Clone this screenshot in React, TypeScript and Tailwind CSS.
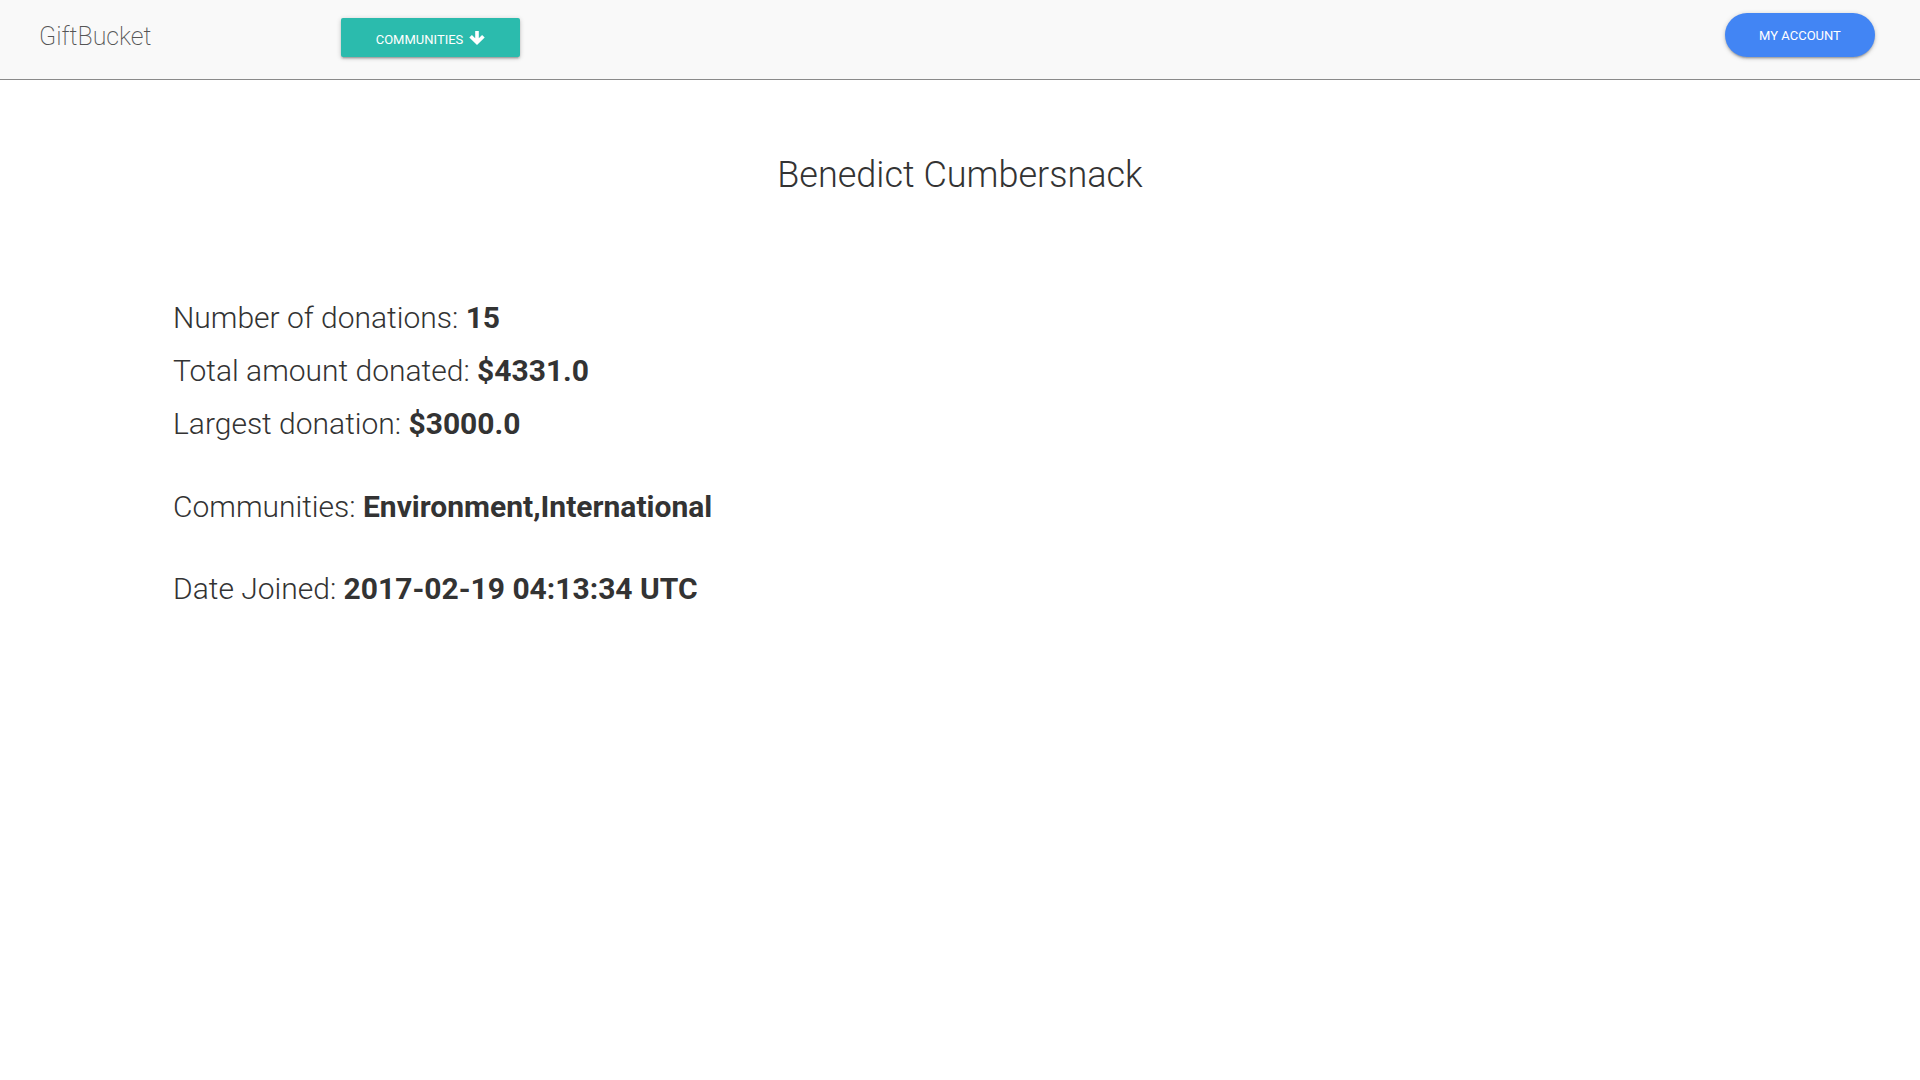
import React from "react";

const stats = [
  { label: "Number of donations:", value: "15" },
  { label: "Total amount donated:", value: "$4331.0" },
  { label: "Largest donation:", value: "$3000.0" },
];

// chunky down arrow, like the old font-awesome glyph
const ArrowDown = () => (
  <svg width="16" height="14" viewBox="0 0 16 14" fill="currentColor" className="-mt-[4px]">
    <path d="M6.2 0h3.6v7.2l3.3-3.3 2.6 2.6L8 14 0.3 6.5l2.6-2.6 3.3 3.3Z" />
  </svg>
);

const Navbar = () => {
  return (
    <nav className="h-[80px] bg-[#f9f9f9] border-b border-[#8a8a8a] flex items-start">
      <div className="w-[341px] pl-[39px] pt-[19px]">
        <a className="text-[25px] font-extralight text-[#555] leading-[36px]">GiftBucket</a>
      </div>
      <button className="mt-[18px] h-[39px] w-[179px] pt-[5px] bg-[#2bbbad] rounded-[2px] text-white text-[13px] uppercase flex items-center justify-center gap-[6px] shadow-[0_2px_2px_0_rgba(0,0,0,0.14),0_3px_1px_-2px_rgba(0,0,0,0.12),0_1px_5px_0_rgba(0,0,0,0.2)]">
        <span>Communities</span>
        <ArrowDown />
      </button>
      <button className="ml-auto mr-[45px] mt-[13px] h-[44px] w-[150px] pt-[1px] bg-[#4285f4] rounded-full text-white text-[13px] uppercase shadow-[0_2px_2px_0_rgba(0,0,0,0.14),0_3px_1px_-2px_rgba(0,0,0,0.12),0_1px_5px_0_rgba(0,0,0,0.2)]">
        My Account
      </button>
    </nav>
  );
};

const App = () => {
  return (
    <div className="min-h-screen bg-white text-[#333] font-['Roboto','Liberation_Sans',sans-serif]">
      <Navbar />
      <main>
        <h1 className="mt-[74px] text-center text-[36px] font-light leading-[1.2]">
          Benedict Cumbersnack
        </h1>
        <div className="mt-[94px] pl-[173px] text-[30px] font-light leading-[53px]">
          {stats.map((s) => (
            <p key={s.label}>
              {s.label} <b className="font-bold">{s.value}</b>
            </p>
          ))}
          <p className="mt-[30px]">
            Communities: <b className="font-bold">Environment,International</b>
          </p>
          <p className="mt-[29px]">
            Date Joined: <b className="font-bold">2017-02-19 04:13:34 UTC</b>
          </p>
        </div>
      </main>
    </div>
  );
};

export default App;
